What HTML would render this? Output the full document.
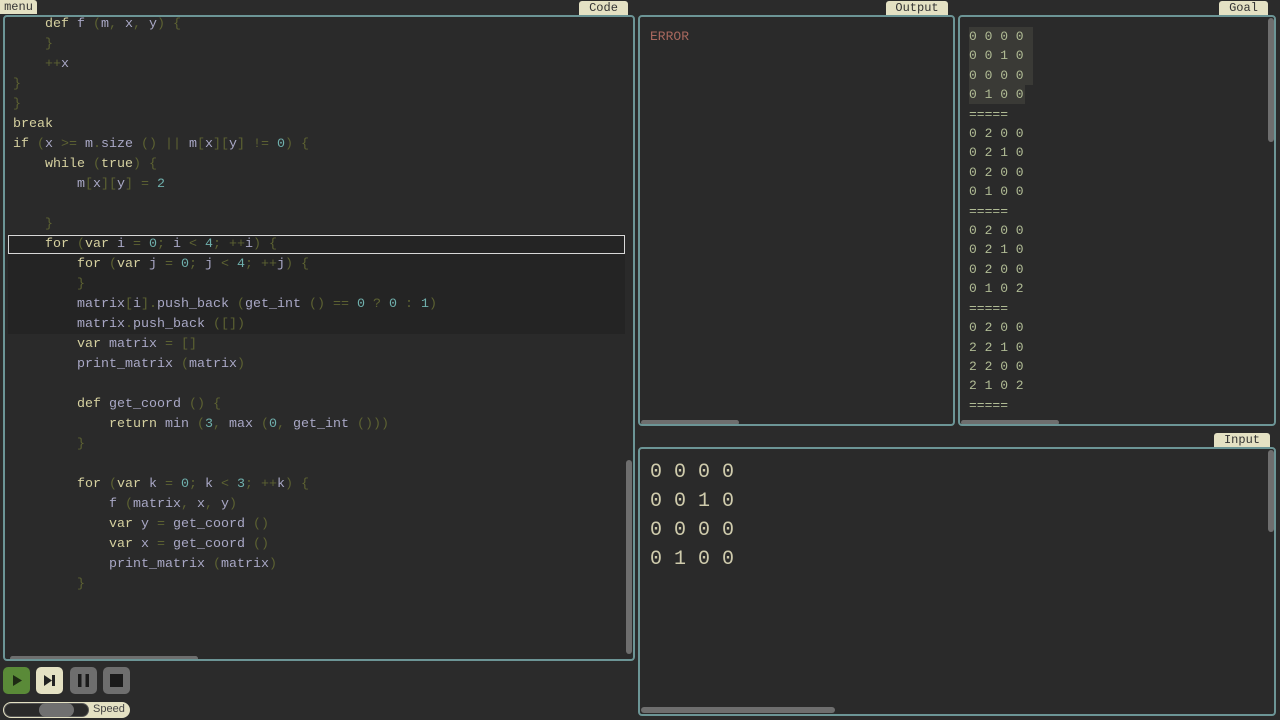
<!DOCTYPE html>
<html><head><meta charset="utf-8"><style>
*{margin:0;padding:0;box-sizing:border-box}
body{width:1280px;height:720px;background:#2b2b2b;position:relative;overflow:hidden;font-family:"Liberation Mono",monospace}
.tab{position:absolute;background:#e4e1c3;color:#333;font-size:12px;line-height:14px;height:14px;text-align:center;border-radius:3px 3px 0 0}
.panel{position:absolute;border:2px solid #6c9596;border-radius:4px;background:#2a2a2a;overflow:hidden}
.code{position:absolute;left:8px;font-size:13.33px;line-height:20px;white-space:pre;color:#a9a8c6}
.k{color:#d6d1a0}.p{color:#5d6232}.n{color:#6fb0ad}
.sb{position:absolute;background:#6e6e6e;border-radius:3px}
.goal{position:absolute;left:9px;top:10px;font-size:13px;line-height:19.4px;white-space:pre;color:#b0bb94}
.btn{position:absolute;top:667px;width:27px;height:27px;border-radius:5px}
</style></head><body>
<div class="tab" style="left:0;top:0;width:37px;border-radius:0 3px 0 0">menu</div>
<div class="tab" style="left:579px;top:1px;width:49px">Code</div>
<div class="tab" style="left:886px;top:1px;width:62px">Output</div>
<div class="tab" style="left:1219px;top:1px;width:49px">Goal</div>
<div class="tab" style="left:1214px;top:433px;width:56px">Input</div>

<div class="panel" style="left:3px;top:15px;width:632px;height:646px">
<div style="position:absolute;left:3px;top:217px;width:617px;height:100px;background:#242424"></div>
<div style="position:absolute;left:3px;top:218px;width:617px;height:19px;border:1px solid #d8d8d8"></div>
<div class="code" style="top:-2px"><span class="k">    def</span> f <span class="p">(</span>m<span class="p">,</span> x<span class="p">,</span> y<span class="p">) {</span>
<span class="p">    }</span>
    <span class="p">++</span>x
<span class="p">}</span>
<span class="p">}</span>
<span class="k">break</span>
<span class="k">if</span> <span class="p">(</span>x <span class="p">&gt;=</span> m<span class="p">.</span>size <span class="p">()</span> <span class="p">||</span> m<span class="p">[</span>x<span class="p">][</span>y<span class="p">]</span> <span class="p">!=</span> <span class="n">0</span><span class="p">) {</span>
    <span class="k">while</span> <span class="p">(</span><span class="k">true</span><span class="p">) {</span>
        m<span class="p">[</span>x<span class="p">][</span>y<span class="p">]</span> <span class="p">=</span> <span class="n">2</span>

<span class="p">    }</span>
    <span class="k">for</span> <span class="p">(</span><span class="k">var</span> i <span class="p">=</span> <span class="n">0</span><span class="p">;</span> i <span class="p">&lt;</span> <span class="n">4</span><span class="p">;</span> <span class="p">++</span>i<span class="p">) {</span>
        <span class="k">for</span> <span class="p">(</span><span class="k">var</span> j <span class="p">=</span> <span class="n">0</span><span class="p">;</span> j <span class="p">&lt;</span> <span class="n">4</span><span class="p">;</span> <span class="p">++</span>j<span class="p">) {</span>
<span class="p">        }</span>
        matrix<span class="p">[</span>i<span class="p">].</span>push_back <span class="p">(</span>get_int <span class="p">()</span> <span class="p">==</span> <span class="n">0</span> <span class="p">?</span> <span class="n">0</span> <span class="p">:</span> <span class="n">1</span><span class="p">)</span>
        matrix<span class="p">.</span>push_back <span class="p">([])</span>
        <span class="k">var</span> matrix <span class="p">= []</span>
        print_matrix <span class="p">(</span>matrix<span class="p">)</span>

        <span class="k">def</span> get_coord <span class="p">() {</span>
            <span class="k">return</span> min <span class="p">(</span><span class="n">3</span><span class="p">,</span> max <span class="p">(</span><span class="n">0</span><span class="p">,</span> get_int <span class="p">()))</span>
<span class="p">        }</span>

        <span class="k">for</span> <span class="p">(</span><span class="k">var</span> k <span class="p">=</span> <span class="n">0</span><span class="p">;</span> k <span class="p">&lt;</span> <span class="n">3</span><span class="p">;</span> <span class="p">++</span>k<span class="p">) {</span>
            f <span class="p">(</span>matrix<span class="p">,</span> x<span class="p">,</span> y<span class="p">)</span>
            <span class="k">var</span> y <span class="p">=</span> get_coord <span class="p">()</span>
            <span class="k">var</span> x <span class="p">=</span> get_coord <span class="p">()</span>
            print_matrix <span class="p">(</span>matrix<span class="p">)</span>
<span class="p">        }</span></div>
<div class="sb" style="left:621px;top:443px;width:6px;height:194px"></div>
<div class="sb" style="left:5px;top:639px;width:188px;height:5px"></div>
</div>

<div class="panel" style="left:638px;top:15px;width:317px;height:411px">
<div style="position:absolute;left:10px;top:12px;font-size:13px;color:#a8685e">ERROR</div>
<div class="sb" style="left:1px;top:403px;width:98px;height:5px"></div>
</div>

<div class="panel" style="left:958px;top:15px;width:318px;height:411px">
<div style="position:absolute;left:9px;top:10px;width:64px;height:58px;background:#3a3a36"></div>
<div style="position:absolute;left:9px;top:68px;width:56px;height:19px;background:#3a3a36"></div>
<div class="goal">0 0 0 0
0 0 1 0
0 0 0 0
0 1 0 0
=====
0 2 0 0
0 2 1 0
0 2 0 0
0 1 0 0
=====
0 2 0 0
0 2 1 0
0 2 0 0
0 1 0 2
=====
0 2 0 0
2 2 1 0
2 2 0 0
2 1 0 2
=====</div>
<div class="sb" style="left:308px;top:1px;width:6px;height:124px"></div>
<div class="sb" style="left:1px;top:403px;width:98px;height:5px"></div>
</div>

<div class="panel" style="left:638px;top:447px;width:638px;height:269px">
<div style="position:absolute;left:10px;top:9px;font-size:20px;line-height:29px;white-space:pre;color:#cfcbac">0 0 0 0
0 0 1 0
0 0 0 0
0 1 0 0</div>
<div class="sb" style="left:628px;top:1px;width:6px;height:82px"></div>
<div class="sb" style="left:1px;top:258px;width:194px;height:6px"></div>
</div>

<div class="btn" style="left:3px;background:#5a8a38"><svg width="27" height="27"><path d="M10 8 L19 13.5 L10 19Z" fill="#1e2a14"/></svg></div>
<div class="btn" style="left:36px;background:#e4e1c3"><svg width="27" height="27"><path d="M8 8 L16 13.5 L8 19Z" fill="#222"/><rect x="16" y="8" width="3" height="11" fill="#222"/></svg></div>
<div class="btn" style="left:70px;background:#6e6e6e"><svg width="27" height="27"><rect x="8" y="7" width="3.5" height="13" fill="#1a1a1a"/><rect x="15.5" y="7" width="3.5" height="13" fill="#1a1a1a"/></svg></div>
<div class="btn" style="left:103px;background:#6e6e6e"><svg width="27" height="27"><rect x="7" y="7" width="13" height="13" fill="#1a1a1a"/></svg></div>
<div style="position:absolute;left:3px;top:702px;width:127px;height:16px;border-radius:8px;background:#e4e1c3"></div>
<div style="position:absolute;left:4px;top:703px;width:85px;height:14px;border-radius:7px;background:#2a2a2a;border:1px solid #555"></div>
<div style="position:absolute;left:39px;top:703px;width:35px;height:14px;border-radius:7px;background:#707070"></div>
<div style="position:absolute;left:93px;top:703px;font-family:'Liberation Sans',sans-serif;font-size:11px;color:#444">Speed</div>
</body></html>
